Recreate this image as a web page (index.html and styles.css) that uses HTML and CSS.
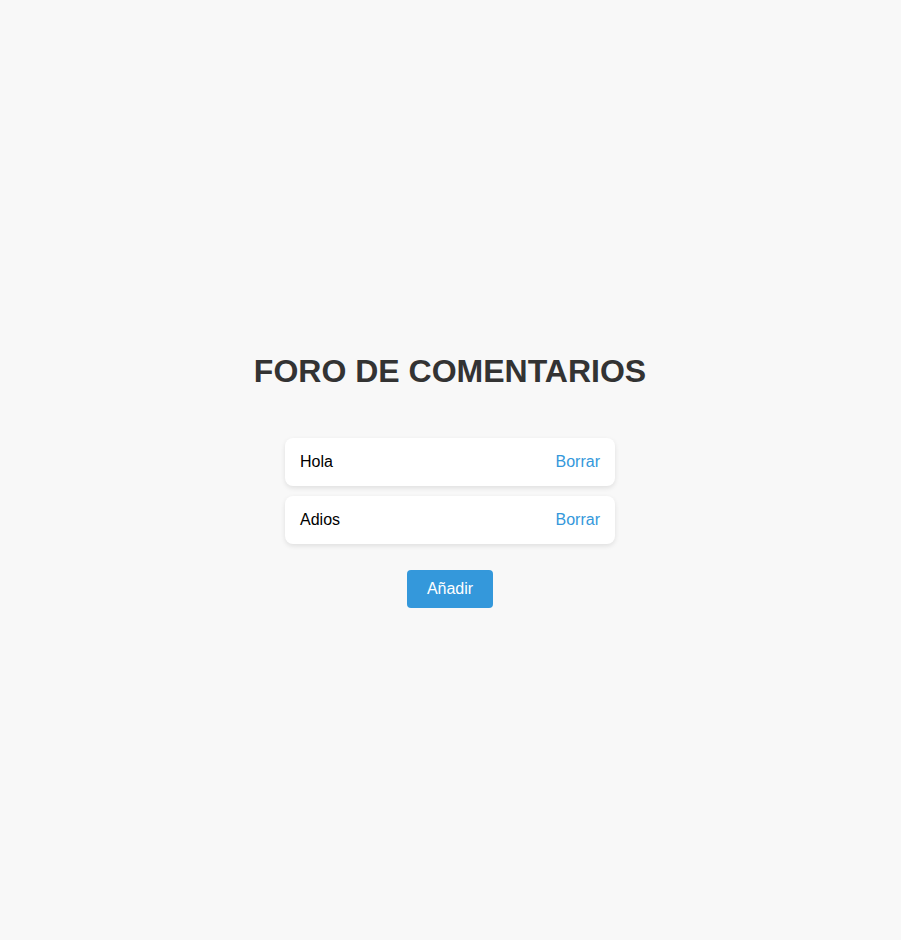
FILE: index.html
```html
<!DOCTYPE html>
<html lang="es">
<head>
<meta charset="utf-8">
<title>Foro de comentarios</title>
<link rel="stylesheet" href="styles.css">
</head>
<body>
<main class="app">
  <h1 class="title">FORO DE COMENTARIOS</h1>
  <ul class="list">
    <li class="card"><span class="text">Hola</span><button class="delete">Borrar</button></li>
    <li class="card"><span class="text">Adios</span><button class="delete">Borrar</button></li>
  </ul>
  <button class="add">Añadir</button>
</main>
</body>
</html>
```

FILE: styles.css
```css
html, body {
  margin: 0;
  padding: 0;
}
body {
  background: #f8f8f8;
  font-family: "Liberation Sans", Arial, sans-serif;
  color: #000;
}
.app {
  box-sizing: border-box;
  min-height: 100vh;
  padding: 0 1px 1px 0;
  display: flex;
  flex-direction: column;
  align-items: center;
  justify-content: center;
}
.title {
  font-size: 32px;
  font-weight: bold;
  color: #333;
  margin: 21px 0 48px;
  line-height: 37px;
}
.list {
  list-style: none;
  margin: 0;
  padding: 0;
  width: 330px;
  display: flex;
  flex-direction: column;
  gap: 10px;
}
.card {
  background: #fff;
  border-radius: 8px;
  box-shadow: 0 2px 5px rgba(0, 0, 0, 0.1);
  height: 48px;
  box-sizing: border-box;
  padding: 0 15px;
  display: flex;
  align-items: center;
  justify-content: space-between;
  font-size: 16px;
}
.delete {
  background: none;
  border: none;
  padding: 0;
  color: #3498db;
  font-family: inherit;
  font-size: 16px;
  cursor: pointer;
}
.add {
  margin-top: 26px;
  background: #3498db;
  color: #fff;
  border: none;
  border-radius: 4px;
  padding: 0 20px;
  height: 38px;
  font-family: inherit;
  font-size: 16px;
  cursor: pointer;
}
```
